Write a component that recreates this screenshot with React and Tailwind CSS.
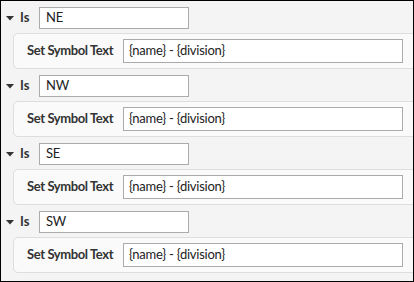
const rules = ['NE', 'NW', 'SE', 'SW'];

const font = { fontFamily: 'Lato, "Noto Sans", sans-serif' };

function Caret() {
  return (
    <svg width="8" height="5" viewBox="0 0 8 5" className="shrink-0">
      <path d="M0 0 L8 0 L4 4.5 Z" fill="#333" />
    </svg>
  );
}

function RuleGroup({ value }) {
  return (
    <div className="flex flex-col">
      {/* condition row */}
      <div className="flex items-center h-[22px]">
        <div className="w-[19px] pl-[5px] flex items-center">
          <Caret />
        </div>
        <span className="w-[19px] text-[13px] font-bold text-[#333]">Is</span>
        <div className="w-[150px] h-[22px] border border-[#ababab] bg-white flex items-center px-[6px] text-[13px] tracking-[-0.2px] text-[#222]">
          {value}
        </div>
      </div>
      {/* action card */}
      <div className="mt-[4px] ml-[12px] -mr-[8px] h-[36px] rounded-[5px] border border-[#dedede] bg-[#fafafa] flex items-center pl-[13px] pr-[10px]">
        <span className="w-[96px] text-[13px] font-bold tracking-[-0.4px] text-[#333] whitespace-nowrap">Set Symbol Text</span>
        <div className="w-[280px] h-[24px] border border-[#ababab] bg-white flex items-center px-[5px] text-[13px] tracking-[-0.25px] text-[#222]">
          {'{name} - {division}'}
        </div>
      </div>
    </div>
  );
}

export default function App() {
  return (
    <div className="w-[414px] h-[282px] border border-black bg-[#f4f4f4] overflow-hidden" style={font}>
      <div className="flex flex-col gap-[6px] pt-[6px]">
        {rules.map((r) => (
          <RuleGroup key={r} value={r} />
        ))}
      </div>
    </div>
  );
}
